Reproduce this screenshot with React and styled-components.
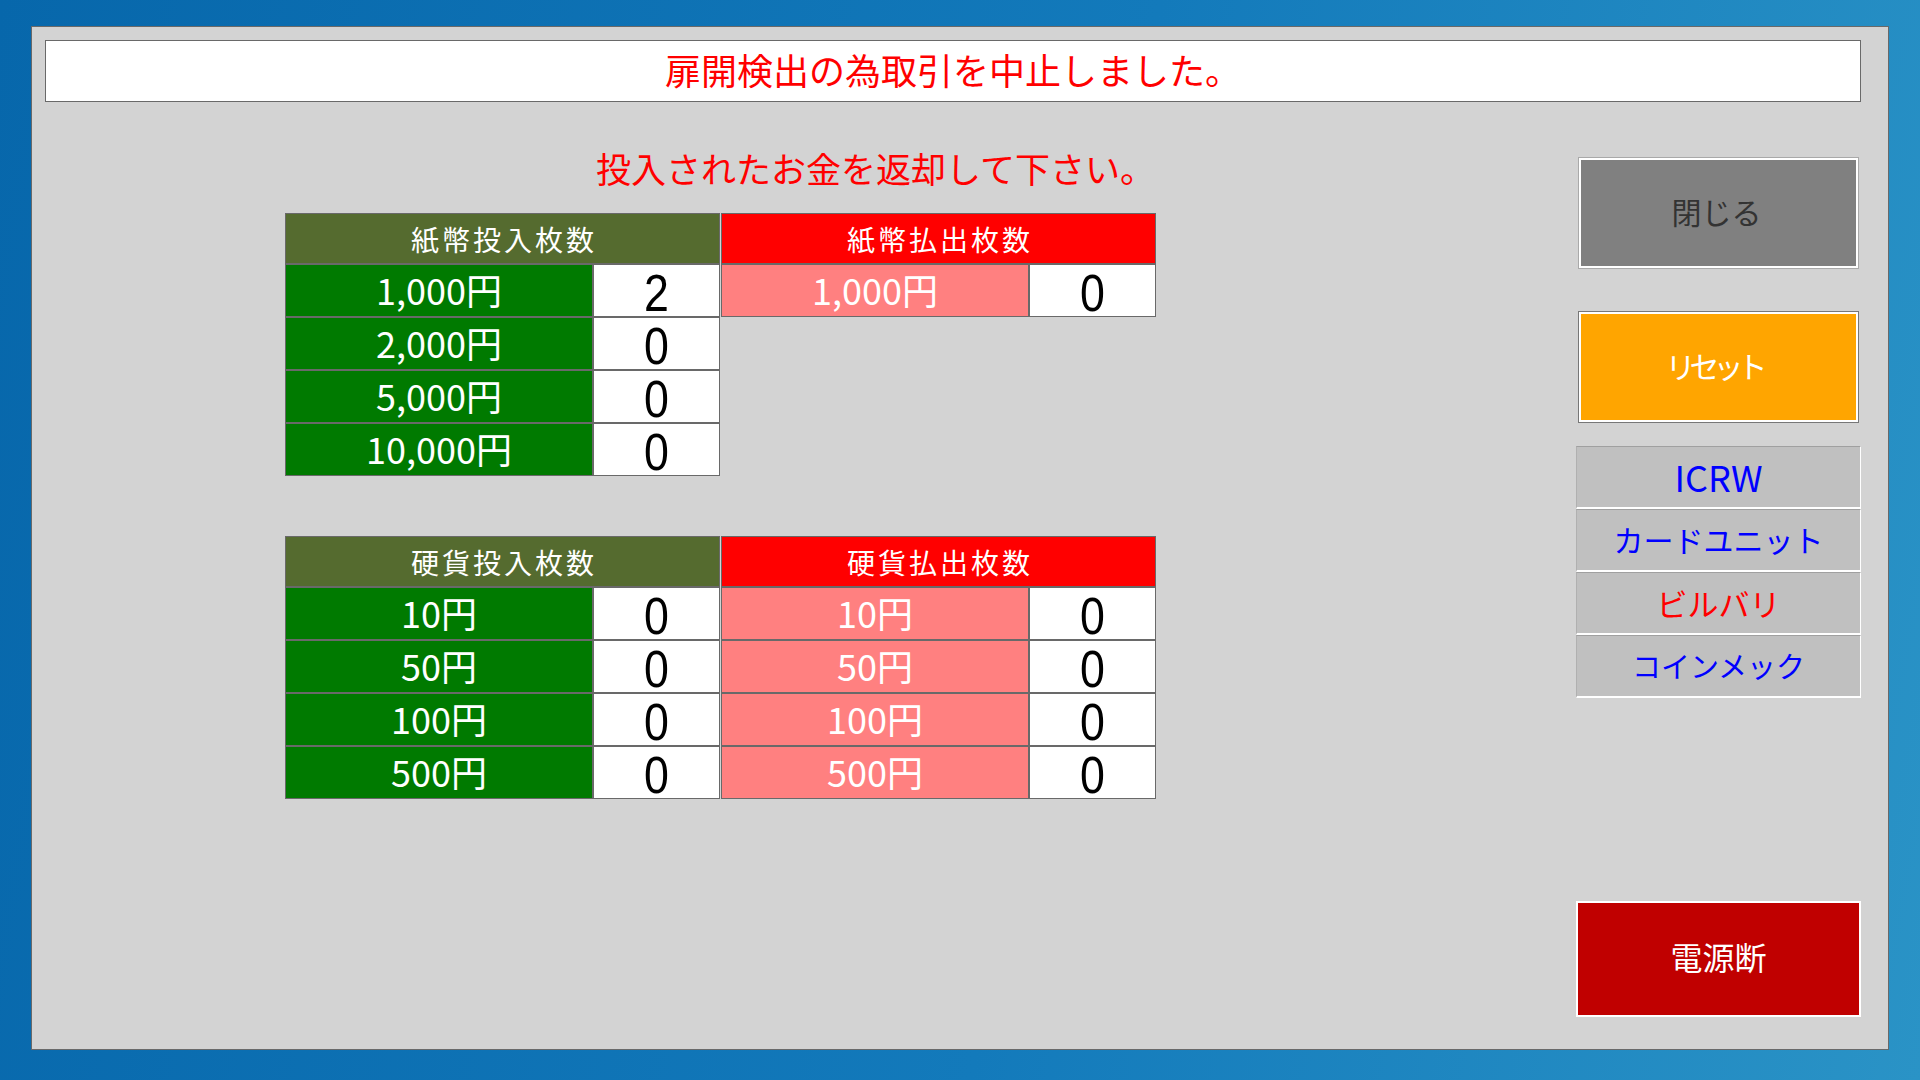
import React from "react";
import styled, { createGlobalStyle } from "styled-components";

const GlobalStyle = createGlobalStyle`
  html, body, #root {
    margin: 0;
    padding: 0;
  }
  body {
    font-family: "Noto Sans CJK JP", "Noto Sans", sans-serif;
  }
`;

const Desktop = styled.div`
  width: 1920px;
  height: 1080px;
  box-sizing: border-box;
  padding: 26px 31px 30px 31px;
  display: flex;
  background: linear-gradient(100deg, #0767ab 0%, #137abb 55%, #2a93c6 100%);
`;

const Panel = styled.div`
  flex: 1;
  display: flex;
  flex-direction: column;
  background: #d3d3d3;
  border: 1px solid #696969;
  padding: 13px 27px 13px 13px;
`;

const MessageBar = styled.div`
  height: 62px;
  box-sizing: border-box;
  background: #ffffff;
  border: 1px solid #696969;
  display: flex;
  align-items: center;
  justify-content: center;
  color: #ff0000;
  font-size: 36px;
  line-height: 1;
  padding-bottom: 5px;
`;

const Body = styled.div`
  flex: 1;
  display: flex;
`;

const Main = styled.div`
  flex: 1;
  display: flex;
  flex-direction: column;
  padding-left: 240px;
`;

const Instruction = styled.div`
  margin: 46px 0 25px 311px;
  font-size: 35px;
  line-height: 40px;
  color: #ff0000;
  white-space: nowrap;
`;

const TableGroup = styled.div`
  display: flex;
  gap: 1px;
  margin-top: ${(props) => props.$top || 0}px;
`;

const Block = styled.div`
  width: 435px;
  display: grid;
  grid-template-columns: 308px 127px;
  grid-template-rows: 51px;
  grid-auto-rows: 53px;
  align-content: start;
`;

const Header = styled.div`
  grid-column: 1 / span 2;
  box-sizing: border-box;
  border: 1px solid #696969;
  background: ${(props) => props.$bg};
  color: #ffffff;
  font-size: 28px;
  letter-spacing: 3px;
  display: flex;
  align-items: center;
  justify-content: center;
  padding-left: 3px;
`;

const Label = styled.div`
  box-sizing: border-box;
  border: 1px solid #696969;
  background: ${(props) => props.$bg};
  color: #ffffff;
  font-size: 36px;
  line-height: 1;
  display: flex;
  align-items: center;
  justify-content: center;
  padding-bottom: 4px;
`;

const Value = styled.div`
  box-sizing: border-box;
  border: 1px solid #696969;
  background: #ffffff;
  color: #000000;
  display: flex;
  align-items: center;
  justify-content: center;
`;

const Digit = styled.span`
  display: inline-block;
  font-family: "Liberation Sans", Arial, sans-serif;
  font-size: 52px;
  line-height: 1;
  transform: scaleX(0.86);
  margin-top: 5px;
`;

const Side = styled.div`
  width: 285px;
  display: flex;
  flex-direction: column;
  align-items: center;
`;

const BigButton = styled.div`
  width: 281px;
  height: 112px;
  box-sizing: border-box;
  margin-top: ${(props) => props.$top}px;
  border: 1px solid ${(props) => props.$edge};
  box-shadow: inset 0 0 0 2px #ffffff;
  background: ${(props) => props.$bg};
  color: ${(props) => props.$color};
  font-size: 30px;
  letter-spacing: ${(props) => props.$spacing || 0}px;
  display: flex;
  align-items: center;
  justify-content: center;
  padding-bottom: 4px;
  padding-right: ${(props) => -(props.$spacing || 0) + 4}px;
`;

const DeviceList = styled.div`
  width: 285px;
  margin-top: 23px;
  display: flex;
  flex-direction: column;
`;

const DeviceItem = styled.div`
  height: 63px;
  box-sizing: border-box;
  background: #c0c0c0;
  border-top: 1px solid #a0a0a0;
  border-left: 1px solid #b0b0b0;
  border-right: 1px solid #ffffff;
  border-bottom: 2px solid #ffffff;
  color: ${(props) => props.$color};
  font-size: ${(props) => props.$size || 30}px;
  display: flex;
  align-items: center;
  justify-content: center;
  padding-bottom: 2px;
`;

const PowerButton = styled.div`
  width: 285px;
  height: 116px;
  box-sizing: border-box;
  margin-top: auto;
  margin-bottom: 19px;
  border: 2px solid #ffffff;
  background: #c00000;
  color: #ffffff;
  font-size: 32px;
  display: flex;
  align-items: center;
  justify-content: center;
  padding-bottom: 6px;
`;

const OLIVE = "#556b2f";
const GREEN = "#007a00";
const RED = "#ff0000";
const PINK = "#ff8080";

const billIn = [["1,000円", 2], ["2,000円", 0], ["5,000円", 0], ["10,000円", 0]];
const billOut = [["1,000円", 0]];
const coinIn = [["10円", 0], ["50円", 0], ["100円", 0], ["500円", 0]];
const coinOut = [["10円", 0], ["50円", 0], ["100円", 0], ["500円", 0]];

const devices = [
  { name: "ICRW", color: "#0000ff", size: 36 },
  { name: "カードユニット", color: "#0000ff" },
  { name: "ビルバリ", color: "#ff0000", size: 31 },
  { name: "コインメック", color: "#0000ff", size: 29 },
];

const CountTable = ({ title, head, label, rows }) => (
  <Block>
    <Header $bg={head}>{title}</Header>
    {rows.map(([name, count]) => (
      <React.Fragment key={name}>
        <Label $bg={label}>{name}</Label>
        <Value>
          <Digit>{count}</Digit>
        </Value>
      </React.Fragment>
    ))}
  </Block>
);

const App = () => {
  return (
    <Desktop>
      <GlobalStyle />
      <Panel>
        <MessageBar>扉開検出の為取引を中止しました。</MessageBar>
        <Body>
          <Main>
            <Instruction>投入されたお金を返却して下さい。</Instruction>
            <TableGroup>
              <CountTable title="紙幣投入枚数" head={OLIVE} label={GREEN} rows={billIn} />
              <CountTable title="紙幣払出枚数" head={RED} label={PINK} rows={billOut} />
            </TableGroup>
            <TableGroup $top={60}>
              <CountTable title="硬貨投入枚数" head={OLIVE} label={GREEN} rows={coinIn} />
              <CountTable title="硬貨払出枚数" head={RED} label={PINK} rows={coinOut} />
            </TableGroup>
          </Main>
          <Side>
            <BigButton $top={55} $bg="#808080" $edge="#a9a9a9" $color="#333333">
              閉じる
            </BigButton>
            <BigButton $top={42} $bg="#ffa500" $edge="#777777" $color="#ffffff" $spacing={-6}>
              リセット
            </BigButton>
            <DeviceList>
              {devices.map((d) => (
                <DeviceItem key={d.name} $color={d.color} $size={d.size}>
                  {d.name}
                </DeviceItem>
              ))}
            </DeviceList>
            <PowerButton>電源断</PowerButton>
          </Side>
        </Body>
      </Panel>
    </Desktop>
  );
};

export default App;
